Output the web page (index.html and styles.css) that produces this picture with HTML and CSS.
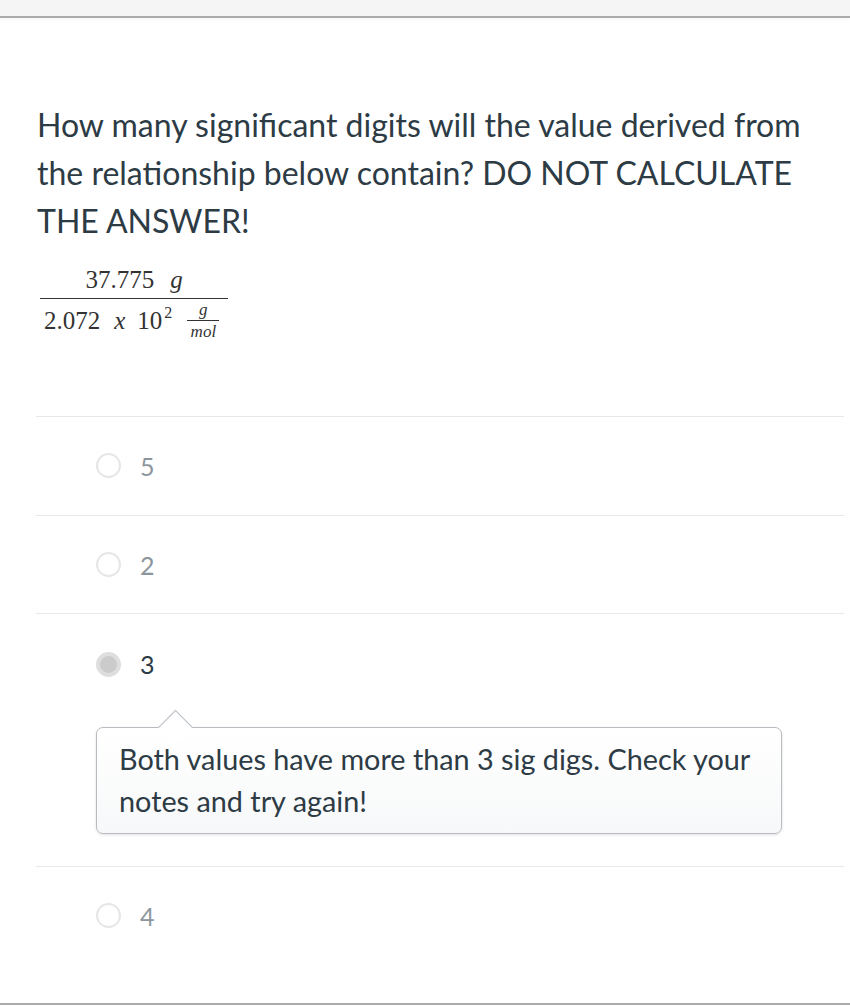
FILE: index.html
```html
<!DOCTYPE html>
<html>
<head>
<meta charset="utf-8">
<link rel="stylesheet" href="styles.css">
</head>
<body>
<div class="topbar"></div>
<div class="content">
  <div class="question">
    <p class="qtext">How many significant digits will the value derived from the relationship below contain? DO NOT CALCULATE THE ANSWER!</p>
    <div class="frac">
      <div class="num"><span>37.775</span><i class="unit">g</i></div>
      <div class="den"><span>2.072</span><i class="op">x</i><span>10<sup>2</sup></span><span class="subfrac"><span class="sn"><i>g</i></span><span class="sd"><i>mol</i></span></span></div>
    </div>
  </div>
  <div class="answers">
    <div class="answer first">
      <span class="radio"></span><span class="label">5</span>
    </div>
    <div class="answer">
      <span class="radio"></span><span class="label">2</span>
    </div>
    <div class="answer selected">
      <div class="row"><span class="radio checked"></span><span class="label">3</span></div>
      <div class="tip">
        <p>Both values have more than 3 sig digs. Check your notes and try again!</p>
      </div>
    </div>
    <div class="answer">
      <span class="radio"></span><span class="label">4</span>
    </div>
  </div>
</div>
<div class="bottombar"></div>
</body>
</html>
```
FILE: styles.css
```css
html, body {
  margin: 0;
  padding: 0;
  background: #ffffff;
}
body {
  width: 850px;
  height: 1006px;
  font-family: Lato, "Open Sans", sans-serif;
  color: #2d3b45;
  display: flex;
  flex-direction: column;
  overflow: hidden;
}
.topbar {
  height: 16px;
  background: #f5f5f5;
  border-bottom: 2px solid #aaaaaa;
  box-shadow: 0 2px 3px rgba(0,0,0,0.03);
  flex: none;
}
.content {
  flex: 1;
  padding: 83px 6px 0 36px;
}
.question {
  padding-left: 1px;
}
.qtext {
  margin: 0;
  font-size: 32px;
  line-height: 48px;
  width: 790px;
}
.frac {
  display: flex;
  flex-direction: column;
  width: 188px;
  margin-top: 20px;
  margin-left: 3px;
  font-family: "Liberation Serif", "Times New Roman", serif;
  font-size: 25px;
  color: #333;
}
.frac .num {
  display: flex;
  justify-content: center;
  align-items: baseline;
  padding: 0 0 3px 0;
  line-height: 30px;
  border-bottom: 1.5px solid #333;
}
.frac .unit {
  margin-left: 16px;
}
.frac .den {
  display: flex;
  align-items: center;
  padding: 3px 0 0 4px;
  line-height: 28px;
}
.frac .op {
  margin: 0 12px 0 14px;
}
.frac sup {
  font-size: 16px;
  line-height: 0;
  vertical-align: baseline;
  position: relative;
  top: -11px;
  margin-left: 2px;
}
.subfrac {
  display: flex;
  flex-direction: column;
  align-items: center;
  margin-left: 15px;
  font-size: 17px;
  line-height: 15px;
}
.subfrac .sn {
  border-bottom: 1px solid #333;
  width: 32px;
  text-align: center;
  line-height: 16px;
  padding-bottom: 2px;
}
.subfrac .sd {
  padding-top: 3px;
  line-height: 15px;
}
.answers {
  margin-top: 77px;
}
.answer {
  border-top: 1px solid #e8e8e8;
  height: 98px;
  display: flex;
  align-items: center;
  padding-left: 60px;
  box-sizing: border-box;
}
.answer.first {
  height: 99px;
  padding-bottom: 1px;
}
.answer.selected {
  height: 253px;
  flex-direction: column;
  align-items: flex-start;
  justify-content: flex-start;
  padding-top: 35px;
}
.answer .row {
  display: flex;
  align-items: center;
}
.radio {
  width: 21px;
  height: 21px;
  border: 2px solid #e6e6e6;
  border-radius: 50%;
  background: #fff;
  flex: none;
}
.radio.checked {
  width: 17px;
  height: 17px;
  border: 4px solid #dedede;
  background: #cbcbcb;
}
.label {
  margin-left: 19px;
  font-size: 25px;
  color: #8b969e;
  line-height: 30px;
}
.selected .label {
  color: #2d3b45;
}
.tip {
  position: relative;
  margin-top: 48px;
  width: 686px;
  box-sizing: border-box;
  border: 1.5px solid #b8bcc0;
  border-radius: 7px;
  background: linear-gradient(#ffffff, #f7f8f9);
  box-shadow: 0 1px 3px rgba(0,0,0,0.12);
  padding: 10px 20px 11px 22px;
}
.tip::before {
  content: "";
  position: absolute;
  left: 66px;
  top: -13px;
  width: 24px;
  height: 24px;
  background: #ffffff;
  border-left: 1.5px solid #b8bcc0;
  border-top: 1.5px solid #b8bcc0;
  transform: rotate(45deg);
}
.tip p {
  position: relative;
  margin: 0;
  font-size: 28.8px;
  line-height: 42px;
}
.bottombar {
  flex: none;
  height: 0;
  border-top: 2px solid #aaaaaa;
  margin-bottom: 1px;
}
```
